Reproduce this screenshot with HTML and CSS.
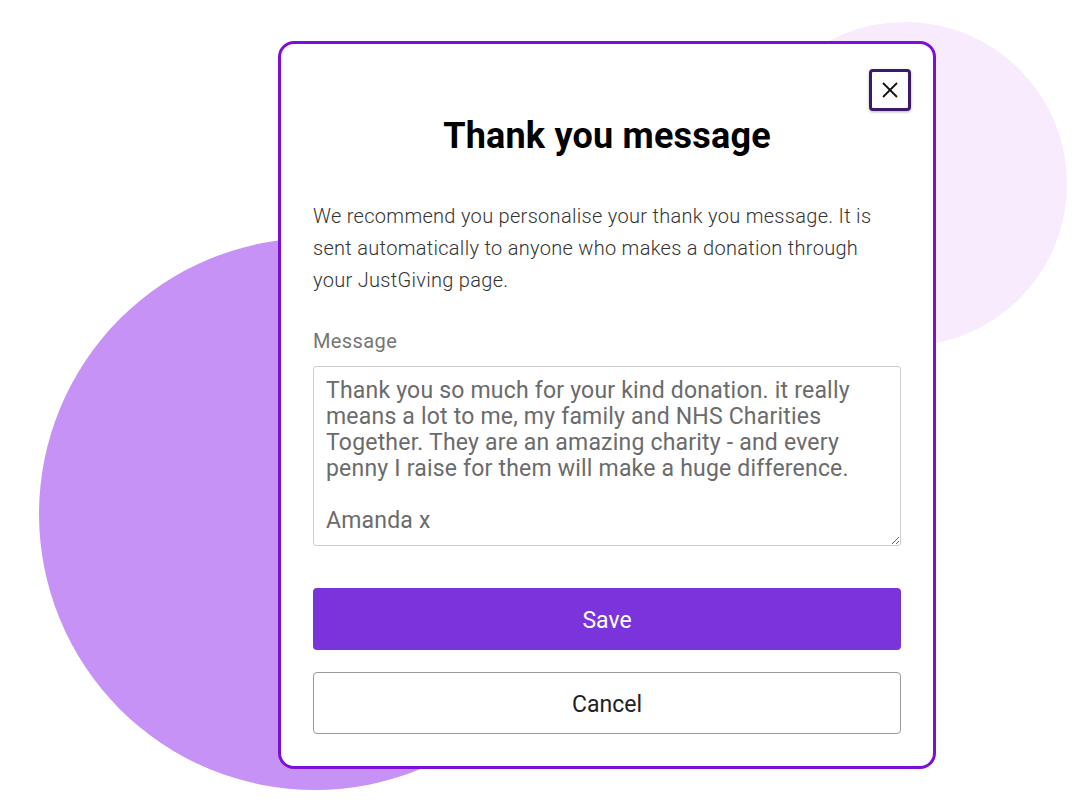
FILE: index.html
```html
<!DOCTYPE html>
<html lang="en">
<head>
    <meta charset="UTF-8">
    <meta name="viewport" content="width=device-width, initial-scale=1.0">
    <title>Thank you message</title>
    <link rel="stylesheet" href="styles.css">
</head>
<body>
    <div class="stage">
        <div class="blob blob-big"></div>
        <div class="blob blob-light"></div>

        <div class="modal">
            <button type="button" class="close-btn" aria-label="Close">
                <svg width="16" height="16" viewBox="0 0 16 16">
                    <line x1="1" y1="1" x2="15" y2="15" stroke="#111" stroke-width="1.8"/>
                    <line x1="15" y1="1" x2="1" y2="15" stroke="#111" stroke-width="1.8"/>
                </svg>
            </button>

            <h1>Thank you message</h1>
            <p class="intro">We recommend you personalise your thank you message. It is sent automatically to anyone who makes a donation through your JustGiving page.</p>

            <label for="message" class="field-label">Message</label>
            <textarea id="message">Thank you so much for your kind donation. it really means a lot to me, my family and NHS Charities Together. They are an amazing charity - and every penny I raise for them will make a huge difference.

Amanda x</textarea>

            <button type="button" class="btn btn-save">Save</button>
            <button type="button" class="btn btn-cancel">Cancel</button>
        </div>
    </div>
</body>
</html>
```

FILE: styles.css
```css
body {
    margin: 0;
    font-family: Roboto, "Liberation Sans", Arial, sans-serif;
    background-color: #FFFFFF;
}
.stage {
    position: relative;
    width: 1092px;
    height: 810px;
    overflow: hidden;
    padding-top: 41px;
    box-sizing: border-box;
}
.blob {
    position: absolute;
    border-radius: 50%;
}
.blob-big {
    left: 39px;
    top: 238px;
    width: 552px;
    height: 552px;
    background-color: #C792F5;
}
.blob-light {
    left: 743px;
    top: 22px;
    width: 324px;
    height: 324px;
    background-color: #F7EBFD;
}
.modal {
    position: relative;
    z-index: 1;
    margin-left: 278px;
    width: 658px;
    box-sizing: border-box;
    background-color: #FFFFFF;
    border: 3px solid #7A0FDC;
    border-radius: 16px;
    padding: 70px 32px 32px;
}
.close-btn {
    position: absolute;
    top: 25px;
    right: 22px;
    width: 42px;
    height: 42px;
    box-sizing: border-box;
    border: 3px solid #3B1A6B;
    border-radius: 4px;
    background-color: #FFFFFF;
    box-shadow: 0 1px 3px rgba(0, 0, 0, 0.3);
    padding: 0;
    display: flex;
    align-items: center;
    justify-content: center;
    cursor: pointer;
}
h1 {
    margin: 0;
    font-size: 36px;
    line-height: 44px;
    font-weight: 700;
    letter-spacing: 0.2px;
    color: #000000;
    text-align: center;
}
.intro {
    margin: 42px 0 0;
    font-size: 20px;
    font-weight: 300;
    line-height: 32px;
    letter-spacing: 0.3px;
    color: #333333;
}
.field-label {
    display: block;
    margin-top: 33px;
    font-size: 20px;
    line-height: 24px;
    letter-spacing: 0.4px;
    color: #757575;
}
textarea {
    display: block;
    margin-top: 13px;
    width: 100%;
    height: 180px;
    box-sizing: border-box;
    padding: 11px 12px 10px;
    border: 1px solid #CCCCCC;
    border-radius: 3px;
    font-family: Roboto, "Liberation Sans", Arial, sans-serif;
    font-size: 23px;
    line-height: 26px;
    letter-spacing: 0.2px;
    color: #6B6B6B;
    resize: vertical;
    overflow: hidden;
}
.btn {
    display: block;
    width: 100%;
    height: 62px;
    box-sizing: border-box;
    padding-top: 4px;
    border-radius: 4px;
    font-family: Roboto, "Liberation Sans", Arial, sans-serif;
    font-size: 23px;
    cursor: pointer;
}
.btn-save {
    margin-top: 42px;
    background-color: #7B33DB;
    color: #FFFFFF;
    border: none;
}
.btn-cancel {
    margin-top: 22px;
    background-color: #FFFFFF;
    color: #222222;
    border: 1px solid #9A9A9A;
}
```
